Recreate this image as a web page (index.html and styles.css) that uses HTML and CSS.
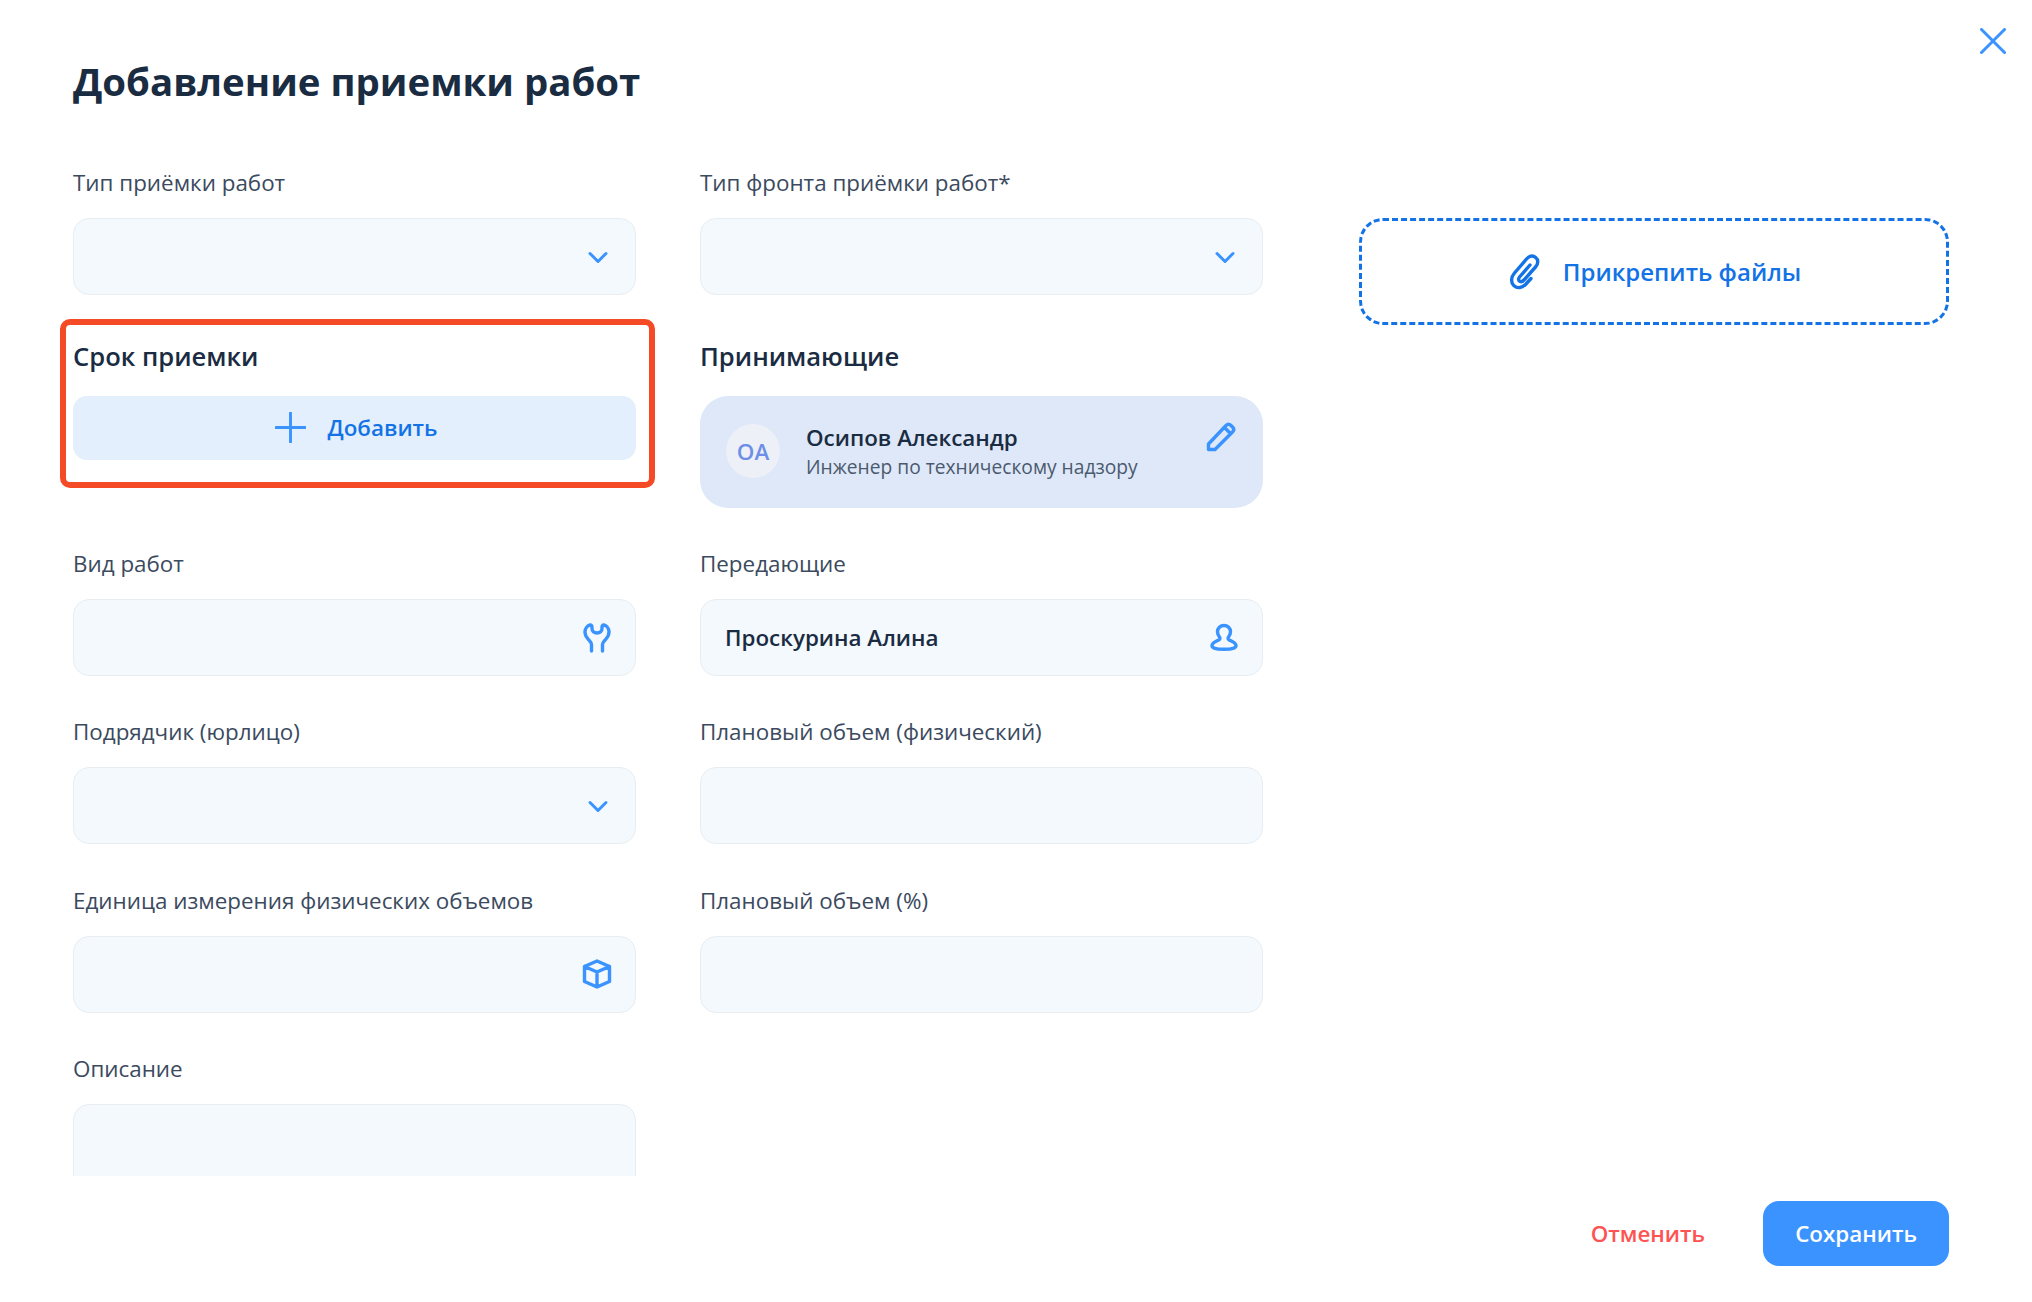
FILE: index.html
```html
<!DOCTYPE html>
<html lang="en">
<head>
    <meta charset="UTF-8">
    <meta name="viewport" content="width=device-width, initial-scale=1.0">
    <title>Добавление приемки работ</title>
    <link rel="stylesheet" href="styles.css">
</head>
<body>
  <div class="modal">
    <button class="close-button" aria-label="Закрыть">
      <svg viewBox="0 0 26 26" width="26" height="26"><path d="M1.500 1.500l23 23M24.500 1.500l-23 23"/></svg>
    </button>

    <h1 class="modal-title">Добавление приемки работ</h1>

    <div class="modal-body">
      <div class="form-grid">
        <div class="field">
          <label class="field-label">Тип приёмки работ</label>
          <div class="field-input">
            <svg class="icon" viewBox="0 0 26 26"><path d="M5 9.500l8 8 8-8"/></svg>
          </div>
        </div>
        <div class="field">
          <label class="field-label">Тип фронта приёмки работ*</label>
          <div class="field-input">
            <svg class="icon" viewBox="0 0 26 26"><path d="M5 9.500l8 8 8-8"/></svg>
          </div>
        </div>

        <section class="group">
          <h2 class="group-title">Срок приемки</h2>
          <button class="add-button">
            <svg viewBox="0 0 32 32" width="31" height="31"><path d="M16 1v30M1 16h30"/></svg>
            Добавить
          </button>
          <div class="highlight"></div>
        </section>
        <section class="group">
          <h2 class="group-title">Принимающие</h2>
          <div class="person-card">
            <div class="avatar">ОА</div>
            <div class="person-info">
              <div class="person-name">Осипов Александр</div>
              <div class="person-role">Инженер по техническому надзору</div>
            </div>
            <svg class="icon-lg edit-icon" viewBox="0 0 30 30"><path d="M2.500 27.500V22L20 3.500C21.500 2 23.500 2 25 3.500L26.500 5C28 6.500 28 8.500 26.500 10L9 27.500ZM18.500 5.500L24.500 11.500"/></svg>
          </div>
        </section>

        <div class="field">
          <label class="field-label">Вид работ</label>
          <div class="field-input">
            <svg class="icon-lg" viewBox="0 0 30 30"><path d="M9.500 28V21.500C9.500 19.500 8 18.500 6 16C3.500 13 2.800 10.500 3 8.500C3.300 5.500 5.500 2.500 8 2C9.500 1.800 10 3 10 4V5.500C10 8 12 10 15 10C18 10 20 8 20 5.500V4C20 3 20.500 1.800 22 2C24.500 2.500 26.700 5.500 27 8.500C27.200 10.500 26.500 13 24 16C22 18.500 20.500 19.500 20.500 21.500V28"/></svg>
          </div>
        </div>
        <div class="field">
          <label class="field-label">Передающие</label>
          <div class="field-input">
            <span class="field-value">Проскурина Алина</span>
            <svg class="icon-lg" viewBox="0 0 30 30"><path d="M15 2.500c-3.700 0-6.500 2.800-6.500 6.300 0 2.400 1 4 2 5.200.9 1.200.4 2.300-.8 3-2 1.200-6.700 2.500-6.700 5.800 0 2.200 4 3.500 12 3.500s12-1.300 12-3.500c0-3.300-4.700-4.600-6.700-5.800-1.200-.7-1.700-1.800-.8-3 1-1.200 2-2.800 2-5.200 0-3.500-2.800-6.300-6.500-6.300z"/></svg>
          </div>
        </div>

        <div class="field">
          <label class="field-label">Подрядчик (юрлицо)</label>
          <div class="field-input">
            <svg class="icon" viewBox="0 0 26 26"><path d="M5 9.500l8 8 8-8"/></svg>
          </div>
        </div>
        <div class="field">
          <label class="field-label">Плановый объем (физический)</label>
          <div class="field-input"></div>
        </div>

        <div class="field">
          <label class="field-label">Единица измерения физических объемов</label>
          <div class="field-input">
            <svg class="icon-lg" viewBox="0 0 30 30"><path d="M15 2l12.500 5.500v15L15 28 2.500 22.500v-15zM2.500 7.500L15 13l12.500-5.500M15 13v15"/></svg>
          </div>
        </div>
        <div class="field">
          <label class="field-label">Плановый объем (%)</label>
          <div class="field-input"></div>
        </div>

        <div class="field">
          <label class="field-label">Описание</label>
          <div class="field-input field-textarea"></div>
        </div>
      </div>

      <button class="attach-button">
        <svg viewBox="0 0 32 36" width="32" height="36"><path d="M21 11L10.500 23C9 25 9.500 26.800 11 27.500C12.300 28 13.800 27.300 15 26L26.500 13C29.500 9.500 29.500 5.500 26.500 3.300C23.500 1 20 2 17.500 5L5.500 19C2 23 1.500 28.500 5 31.800C8.500 34.800 13 34 16.500 30.500L22 24.500"/></svg>
        Прикрепить файлы
      </button>
    </div>

    <div class="modal-footer">
      <button class="cancel-button">Отменить</button>
      <button class="save-button">Сохранить</button>
    </div>
  </div>
</body>
</html>
```

FILE: styles.css
```css
* {
  box-sizing: border-box;
}

html,
body {
  margin: 0;
  height: 100%;
}

body {
  font-family: "Open Sans", "Noto Sans", sans-serif;
  color: #1a2c42;
  background: #fff;
}

button {
  font-family: inherit;
  border: none;
  background: none;
  cursor: pointer;
  padding: 0;
}

svg {
  flex-shrink: 0;
  fill: none;
  stroke: #3a93ff;
  stroke-width: 3;
  stroke-linecap: round;
  stroke-linejoin: round;
}

.modal {
  position: relative;
  height: 1302px;
  display: flex;
  flex-direction: column;
  padding: 0 83px 36px 0;
}

.close-button {
  position: absolute;
  top: 28px;
  right: 26px;
  width: 26px;
  height: 26px;
}

.modal-title {
  margin: 53px 0 0 73px;
  height: 56px;
  font-size: 38.4px;
  line-height: 56px;
  font-weight: 700;
}

/* body is clipped, padding keeps room for the red frame on the left */
.modal-body {
  display: flex;
  align-items: flex-start;
  gap: 96px;
  margin-top: 58px;
  padding-left: 73px;
  height: 1009px;
  overflow: hidden;
}

.form-grid {
  display: grid;
  grid-template-columns: 563px 563px;
  column-gap: 64px;
  row-gap: 40.3px;
}

.field-label {
  display: block;
  font-size: 22.4px;
  line-height: 32.5px;
  margin-bottom: 18.5px;
  color: #3b4a5e;
}

.field-input {
  height: 77px;
  display: flex;
  align-items: center;
  justify-content: flex-end;
  padding: 0 24.5px 0 24px;
  background: #f4f9fd;
  border: 1px solid #e8edf1;
  border-radius: 16px;
}

.field-textarea {
  height: 160px;
}

.field-value {
  margin-right: auto;
  font-size: 22.4px;
  font-weight: 600;
}

.icon {
  width: 26px;
  height: 26px;
}

.icon-lg {
  width: 30px;
  height: 30px;
  margin-right: -1.5px;
  stroke-width: 3.4;
}

.group {
  position: relative;
  padding-top: 6px;
}

.group-title {
  margin: 0 0 23px;
  font-size: 25.6px;
  line-height: 32px;
  font-weight: 600;
}

.highlight {
  position: absolute;
  top: -16px;
  left: -13px;
  width: 595px;
  height: 169px;
  border: 6px solid #f44a25;
  border-radius: 10px;
}

.add-button {
  width: 100%;
  height: 64px;
  display: flex;
  align-items: center;
  justify-content: center;
  gap: 21px;
  padding: 0 0 2px 4px;
  background: #e3effd;
  border-radius: 14px;
  color: #1373e6;
  font-size: 22.4px;
  font-weight: 600;
}

.person-card {
  height: 111.5px;
  display: flex;
  align-items: center;
  padding: 0 26px;
  background: #dfe8f8;
  border-radius: 28px;
}

.avatar {
  width: 54px;
  height: 54px;
  flex-shrink: 0;
  display: flex;
  align-items: center;
  justify-content: center;
  margin-bottom: 2px;
  background: #edf0f6;
  border-radius: 50%;
  color: #6e8fe8;
  font-size: 22.4px;
  font-weight: 600;
}

.person-info {
  margin-left: 26px;
  flex: 1;
}

.person-name {
  font-size: 22.4px;
  line-height: 30px;
  font-weight: 600;
}

.person-role {
  font-size: 19.2px;
  line-height: 28px;
  color: #4a5a6e;
}

.edit-icon {
  align-self: flex-start;
  margin-top: 26px;
  margin-right: 1px;
}

.attach-button {
  width: 590px;
  height: 107px;
  flex-shrink: 0;
  display: flex;
  align-items: center;
  justify-content: center;
  gap: 22px;
  margin-top: 51px;
  border: 3px dashed #1373e6;
  border-radius: 24px;
  color: #1373e6;
  font-size: 24px;
  font-weight: 600;
}

.attach-button svg {
  margin-left: 2px;
  stroke: #1373e6;
  stroke-width: 3.4;
}

.modal-footer {
  display: flex;
  align-items: center;
  justify-content: flex-end;
  margin-top: auto;
}

.cancel-button {
  margin-right: 58px;
  color: #ff5252;
  font-size: 22.4px;
  font-weight: 600;
}

.save-button {
  width: 186px;
  height: 65px;
  background: #3a93ff;
  border-radius: 16px;
  color: #fff;
  font-size: 22.4px;
  font-weight: 600;
}
```
